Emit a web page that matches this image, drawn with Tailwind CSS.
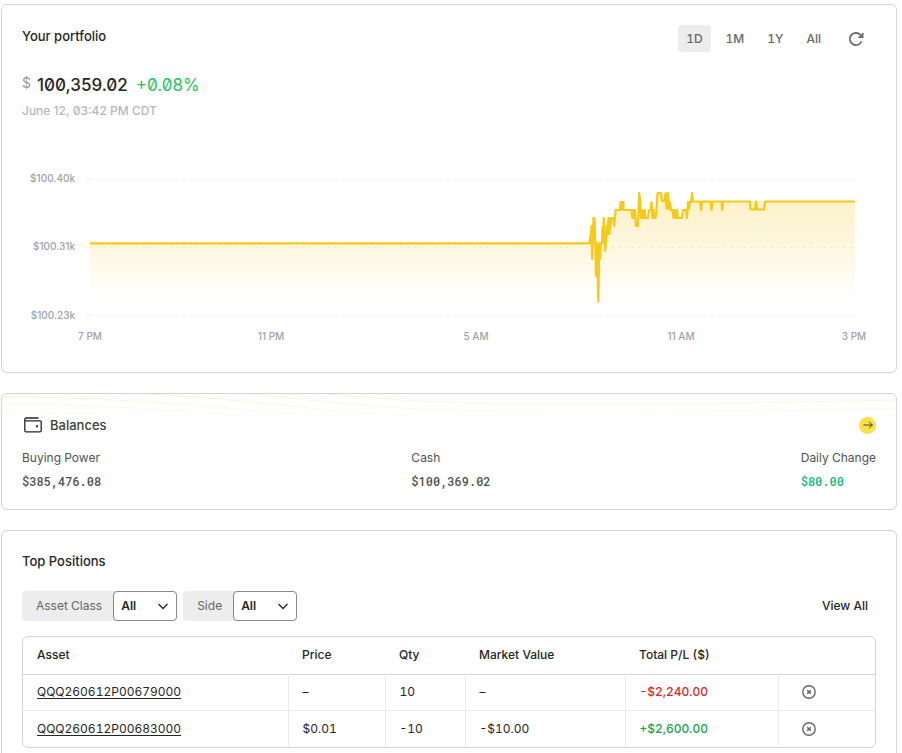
<!DOCTYPE html>
<html lang="en">
  <head>
    <meta charset="UTF-8" />
    <meta name="viewport" content="width=device-width, initial-scale=1.0" />
    <script src="https://cdn.jsdelivr.net/npm/@tailwindcss/browser@4"></script>
    <title>Portfolio</title>
  </head>
  <body class="h-screen overflow-hidden bg-white font-['Inter',sans-serif] text-xs text-[#262626] tabular-nums antialiased">
    <main class="flex flex-col gap-5 pt-1 pr-[5px] pl-px">
      <!-- Portfolio chart -->
      <section class="rounded-md border border-[#d4d4d4] p-5">
        <div class="flex items-start justify-between">
          <h2 class="text-[13px] leading-[22px] font-medium">Your portfolio</h2>
          <div class="mr-3 flex items-center gap-[7px] font-medium text-[#666]">
            <button type="button" class="h-[27px] rounded bg-[#ededed] px-2">1D</button>
            <button type="button" class="h-[27px] rounded px-2">1M</button>
            <button type="button" class="h-[27px] rounded px-2">1Y</button>
            <button type="button" class="h-[27px] rounded px-2">All</button>
            <button type="button" class="ml-3" aria-label="Refresh">
              <svg class="size-4" viewBox="0 0 16 16" fill="none" stroke="currentColor" stroke-width="1.7">
                <path d="M13.6 10.2A6.1 6.1 0 1 1 12.4 3.8L14 5.6" />
                <path d="M14.6 2v4.2h-4.2" />
              </svg>
            </button>
          </div>
        </div>
        <div class="mt-[21px] flex items-center text-[17px] leading-6 slashed-zero">
          <span class="mr-1.5 mb-1 text-sm text-[#999]">$</span>
          <span class="font-medium">100,359.02</span>
          <span class="ml-2 text-[#22c55e]">+0.08%</span>
        </div>
        <p class="mt-1 leading-5 font-medium text-[#b8b8b8] slashed-zero">June 12, 03:42 PM CDT</p>

        <svg class="mt-[39px] w-full" viewBox="22 160 854 192" fill="none">
          <defs>
            <linearGradient id="area" gradientUnits="userSpaceOnUse" x1="0" y1="192" x2="0" y2="302">
              <stop offset="0" stop-color="#f5c518" stop-opacity=".26" />
              <stop offset="1" stop-color="#f5c518" stop-opacity="0" />
            </linearGradient>
          </defs>
          <path
            fill="url(#area)"
            d="M90 243H590V235H592V226L594 218L596 243H602L604 227H608V218H614L616 210H635L637 218H640L642 218H648L651 210H656L657 193H661V201H669L672 210H678V218H682L685 210H689V201H855V302H90Z"
          />
          <g stroke="#f3f3f3">
            <path d="M83.500 179.500h7M83.500 247.500h7M83.500 315.500h7" />
            <path stroke="#000" stroke-opacity=".05" stroke-dasharray="3.300 3.300" d="M90 179.500H855M90 247.500H855M90 315.500H855" />
          </g>
          <path
            stroke="#f8c915"
            stroke-width="2.200"
            stroke-linejoin="round"
            d="M90 243.300H589.500L590.500 235V243L591.500 226L592.200 259L593.500 218H594.500L595.300 243L596 276L597 243L598.300 301.500L599.300 243L600 259L601 243H602L602.500 227V243L603.800 218L605 251L606 243L607 226V234L608.500 218V234L609.500 218V234L610.500 218V226L611.500 218H613.500L614.300 226L615.500 210H620L620.500 202L621.500 209L622.500 202L623.500 202V210H631.500L632.300 218L633 210L634 218L635 210L636 226H638L639.200 193L640.200 202L641 218L642 210L643.500 218L644.500 210L645.500 218H648L649 210H650.500L651.500 202L652.500 218L653.500 210L654.500 218L655.500 218L656.500 210L657.500 193H661L662 201H664.500L665.500 193L666.500 209L668 193L669 209L670 202L671 210H672.500L673.500 218L674.500 210L676 218L677 210L678 218H682L683 210H686L687 218L688 202L689 209L690 202H691L692 193L693 201.500H700L701 210L702 201.500H710.500L711.500 210L712.500 201.500H721.500L722.300 210L723 201.500H750L750.500 209.500H755L756 201.500L757 209.500H764L765 201.500H855"
          />
          <g class="text-[10px] font-medium normal-nums" fill="#a1a1aa">
            <g text-anchor="end">
              <text x="75" y="182">$100.40k</text>
              <text x="75" y="250">$100.31k</text>
              <text x="75" y="319">$100.23k</text>
            </g>
            <g text-anchor="middle">
              <text x="90" y="340">7 PM</text>
              <text x="271" y="340">11 PM</text>
              <text x="476" y="340">5 AM</text>
              <text x="681" y="340">11 AM</text>
              <text x="854" y="340">3 PM</text>
            </g>
          </g>
        </svg>
      </section>

      <!-- Balances -->
      <section class="relative overflow-hidden rounded-md border border-[#d4d4d4] px-5 pt-5 pb-[18px]">
        <svg class="absolute inset-x-0 top-0 h-9 w-full" viewBox="2 394 894 36" preserveAspectRatio="none" fill="none">
          <defs>
            <linearGradient id="fade" gradientUnits="userSpaceOnUse" x1="0" y1="394" x2="0" y2="428">
              <stop offset="0" stop-color="#fbdc90" stop-opacity=".4" />
              <stop offset="1" stop-color="#fbe9a0" stop-opacity="0" />
            </linearGradient>
          </defs>
          <g stroke="url(#fade)">
            <path d="M1 373C80 373 180 378 290 390S450 403 540 404S760 403 896 400" />
            <path d="M1 381C80 381 180 386 290 398S450 411 540 412S760 411 896 408" />
            <path d="M1 389C80 389 180 394 290 406S450 419 540 420S760 419 896 416" />
            <path d="M1 397C80 397 180 402 290 414S450 427 540 428S760 427 896 424" />
            <path d="M1 404C80 404 180 409 290 421S450 434 540 435" />
            <path d="M1 412C80 412 180 417 290 429" />
            <path d="M1 419C80 419 180 424 290 436" />
          </g>
        </svg>
        <div class="relative flex items-center justify-between">
          <div class="flex items-center gap-2 pl-0.5">
            <svg class="h-4 w-[18px]" viewBox="0 0 18 16" fill="none" stroke="#262626" stroke-width="1.300">
              <path d="M14.500 1H2Q.8 1 .8 2.300V13.700Q.8 14.800 2 14.800H16Q17.200 14.800 17.200 13.600V5Q17.200 3.800 16 3.800H.8" />
              <path stroke-width="2" d="M12 9.200h2" />
            </svg>
            <h2 class="text-[13px] leading-[22px] font-medium text-[#404040]">Balances</h2>
          </div>
          <a href="#" aria-label="Open balances" class="flex size-[17px] items-center justify-center rounded-full bg-[#fde047]">
            <svg class="size-2.5" viewBox="0 0 10 10" fill="none" stroke="#4a4215" stroke-width="1">
              <path d="M.5 5h9M6 1.800L9.300 5L6 8.200" />
            </svg>
          </a>
        </div>
        <dl class="relative mt-3 flex justify-between text-[#525252]">
          <div>
            <dt class="leading-5">Buying Power</dt>
            <dd class="mt-[3px] font-['Roboto_Mono','Liberation_Mono',monospace] leading-5 font-medium">$385,476.08</dd>
          </div>
          <div>
            <dt class="leading-5">Cash</dt>
            <dd class="mt-[3px] font-['Roboto_Mono','Liberation_Mono',monospace] leading-5 font-medium">$100,369.02</dd>
          </div>
          <div>
            <dt class="leading-5">Daily Change</dt>
            <dd class="mt-[3px] font-['Roboto_Mono','Liberation_Mono',monospace] leading-5 font-medium text-[#10b981]">$80.00</dd>
          </div>
        </dl>
      </section>

      <!-- Positions -->
      <section class="rounded-md border border-[#d4d4d4] p-5">
        <h2 class="text-[13px] leading-5 font-medium">Top Positions</h2>
        <div class="mt-5 flex items-center justify-between">
          <div class="flex gap-1.5">
            <div class="flex h-[30px] items-center rounded bg-[#ededed]">
              <label for="asset-class" class="pr-[11px] pl-3.5 text-[#666]">Asset Class</label>
              <div class="relative h-full">
                <select id="asset-class" class="h-full w-16 appearance-none rounded border border-[#8a8a8a] bg-white pl-[7px] font-semibold">
                  <option>All</option>
                </select>
                <svg class="pointer-events-none absolute top-3 right-[9px] h-[7px] w-2.5" viewBox="0 0 10 7" fill="none" stroke="#262626" stroke-width="1.300">
                  <path d="M.5 1L5 5.500L9.500 1" />
                </svg>
              </div>
            </div>
            <div class="flex h-[30px] items-center rounded bg-[#ededed]">
              <label for="side" class="pr-[11px] pl-3.5 text-[#666]">Side</label>
              <div class="relative h-full">
                <select id="side" class="h-full w-16 appearance-none rounded border border-[#8a8a8a] bg-white pl-[7px] font-semibold">
                  <option>All</option>
                </select>
                <svg class="pointer-events-none absolute top-3 right-[9px] h-[7px] w-2.5" viewBox="0 0 10 7" fill="none" stroke="#262626" stroke-width="1.300">
                  <path d="M.5 1L5 5.500L9.500 1" />
                </svg>
              </div>
            </div>
          </div>
          <a href="#" class="mr-2 font-medium">View All</a>
        </div>

        <div class="mt-[15px] overflow-hidden rounded-md border border-[#d4d4d4]">
          <table class="w-full table-fixed text-left">
            <colgroup>
              <col />
              <col class="w-[97px]" />
              <col class="w-20" />
              <col class="w-40" />
              <col class="w-[153px]" />
              <col class="w-[97px]" />
            </colgroup>
            <thead>
              <tr class="h-[37px] border-b border-[#d4d4d4]">
                <th class="px-3.5 font-medium">Asset</th>
                <th class="px-3.5 font-medium">Price</th>
                <th class="px-3.5 font-medium">Qty</th>
                <th class="px-3.5 font-medium">Market Value</th>
                <th class="px-3.5 font-medium">Total P/L ($)</th>
                <th></th>
              </tr>
            </thead>
            <tbody>
              <tr class="h-9 border-b border-[#ebebeb]">
                <td class="border-r border-[#ebebeb] px-3.5"><a href="#" class="underline underline-offset-2">QQQ260612P00679000</a></td>
                <td class="border-r border-[#ebebeb] px-3.5">–</td>
                <td class="border-r border-[#ebebeb] px-3.5">10</td>
                <td class="border-r border-[#ebebeb] px-3.5">–</td>
                <td class="border-r border-[#ebebeb] px-3.5 font-medium text-[#dc2626]">-$2,240.00</td>
                <td class="px-[23px]">
                  <button type="button" class="block" aria-label="Close position">
                    <svg class="size-3.5" viewBox="0 0 14 14" fill="none" stroke="#666" stroke-width="1.400">
                      <circle cx="7" cy="7" r="6.200" />
                      <path stroke-width="1.600" d="M5.200 5.200l3.600 3.600M8.800 5.200l-3.600 3.600" />
                    </svg>
                  </button>
                </td>
              </tr>
              <tr class="h-[37px]">
                <td class="border-r border-[#ebebeb] px-3.5"><a href="#" class="underline underline-offset-2">QQQ260612P00683000</a></td>
                <td class="border-r border-[#ebebeb] px-3.5">$0.01</td>
                <td class="border-r border-[#ebebeb] px-3.5">-10</td>
                <td class="border-r border-[#ebebeb] px-3.5">-$10.00</td>
                <td class="border-r border-[#ebebeb] px-3.5 font-medium text-[#16a34a]">+$2,600.00</td>
                <td class="px-[23px]">
                  <button type="button" class="block" aria-label="Close position">
                    <svg class="size-3.5" viewBox="0 0 14 14" fill="none" stroke="#666" stroke-width="1.400">
                      <circle cx="7" cy="7" r="6.200" />
                      <path stroke-width="1.600" d="M5.200 5.200l3.600 3.600M8.800 5.200l-3.600 3.600" />
                    </svg>
                  </button>
                </td>
              </tr>
            </tbody>
          </table>
        </div>
      </section>
    </main>
  </body>
</html>
